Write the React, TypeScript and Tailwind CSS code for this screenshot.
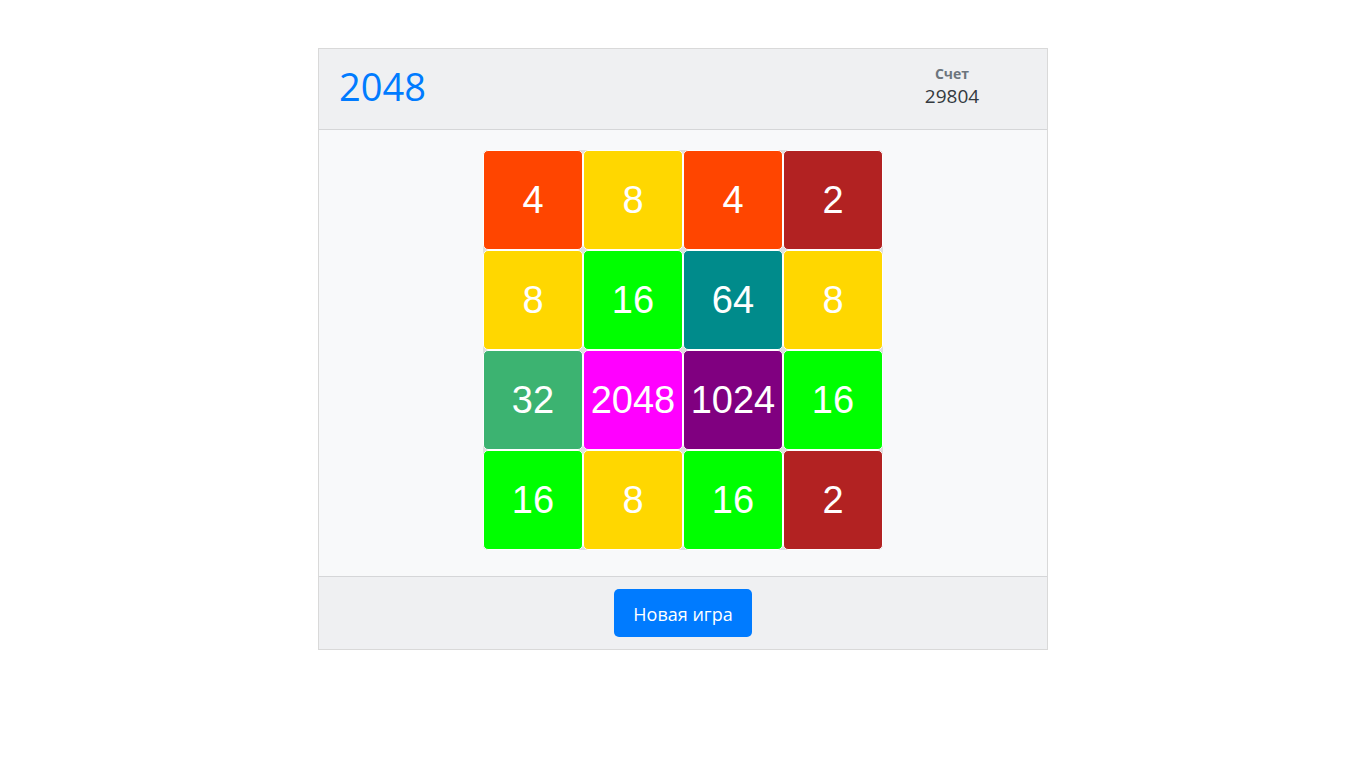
import React from "react";

const colors: Record<number, string> = {
  2: "bg-[#b22222]",
  4: "bg-[#ff4500]",
  8: "bg-[#ffd700]",
  16: "bg-[#00ff00]",
  32: "bg-[#3cb371]",
  64: "bg-[#008b8b]",
  1024: "bg-[#800080]",
  2048: "bg-[#ff00ff]",
};

const board = [
  [4, 8, 4, 2],
  [8, 16, 64, 8],
  [32, 2048, 1024, 16],
  [16, 8, 16, 2],
];

const Tile = ({ value }: { value: number }) => (
  <div
    className={`w-[100px] h-[100px] flex items-center justify-center rounded-[5px] border border-white text-white text-[38px] ${colors[value]}`}
    style={{ fontFamily: '"Liberation Sans", Arial, sans-serif' }}
  >
    {value}
  </div>
);

export default function App() {
  return (
    <div className="min-h-screen bg-white pt-[48px]" style={{ fontFamily: '"Open Sans", "Noto Sans", sans-serif' }}>
      <div className="mx-auto w-[730px] border border-[#d9d9d9] bg-[#f8f9fa]">
        <div className="flex items-center justify-between h-[81px] bg-[#eff0f2] border-b border-[#d5d6d8] pl-[20px]">
          <div className="text-[38px] font-medium text-[#007bff] leading-none -mt-[7px]">2048</div>
          <div className="w-[150px] mr-[20px] flex flex-col items-center -mt-[3px]">
            <div className="text-[14px] font-bold text-[#6c757d] leading-[18px]">Счет</div>
            <div className="text-[19px] text-[#343a40] leading-[27px]">29804</div>
          </div>
        </div>
        <div className="flex justify-center pt-[20px] pb-[26px]">
          <div className="grid grid-cols-4 bg-[#dedede] rounded-[5px]">
            {board.flat().map((v, i) => (
              <Tile key={i} value={v} />
            ))}
          </div>
        </div>
        <div className="flex justify-center h-[73px] items-center bg-[#eff0f2] border-t border-[#d5d6d8]">
          <button className="h-[48px] w-[138px] rounded-[5px] bg-[#007bff] text-white text-[18px] pt-[3px]">
            Новая игра
          </button>
        </div>
      </div>
    </div>
  );
}
